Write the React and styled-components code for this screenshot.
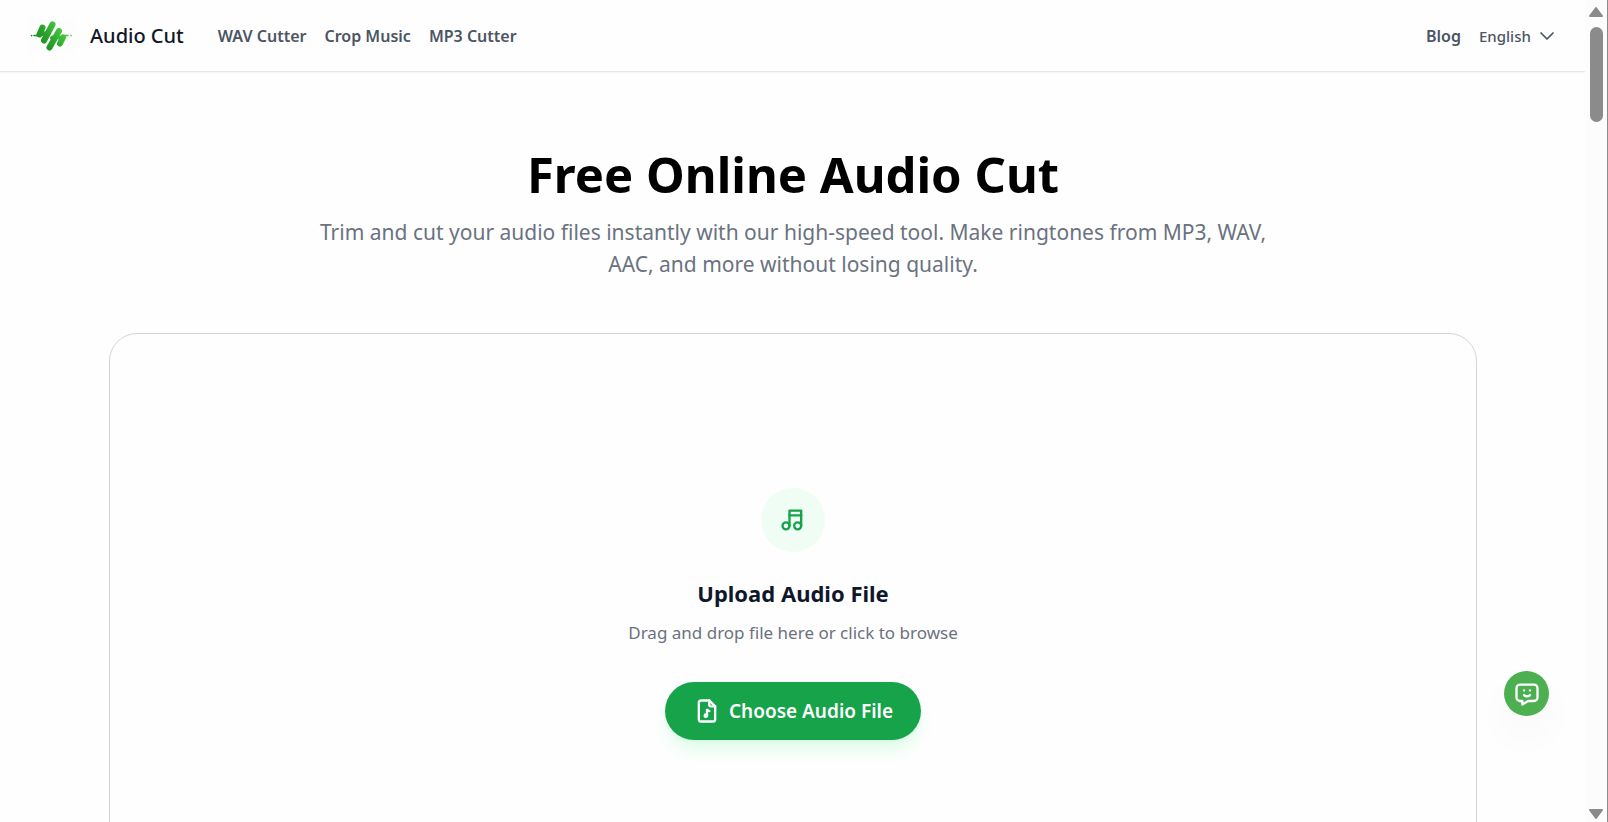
import React from 'react'
import styled, { createGlobalStyle } from 'styled-components'
import { ChevronDown } from 'lucide-react'
import { TbFileMusic, TbMessageChatbot, TbMusic } from 'react-icons/tb'

const navLinks = ["WAV Cutter", "Crop Music", "MP3 Cutter"];

export default function App() {
    return (
        <>
            <GlobalStyle />
            <Screen>
                <Page>
                    <Header />
                    <Main>
                        <Hero>
                            <Title>Free Online Audio Cut</Title>
                            <Lead>
                                Trim and cut your audio files instantly with our high-speed tool. Make ringtones from MP3, WAV, AAC, and more without losing quality.
                            </Lead>
                        </Hero>
                        <UploadCard />
                    </Main>
                </Page>
                <ScrollBar />
            </Screen>
            <ChatButton type="button" aria-label="Feedback">
                <TbMessageChatbot size={28} />
            </ChatButton>
        </>
    )
}

function Header() {
    return (
        <HeaderBar>
            <Brand href="#">
                <Logo />
                Audio Cut
            </Brand>
            <Nav>
                {navLinks.map(link => (
                    <NavLink key={link} href="#">{link}</NavLink>
                ))}
            </Nav>
            <Nav $end>
                <NavLink href="#">Blog</NavLink>
                <Language>
                    <LanguageSelect name="language" aria-label="Language" defaultValue="en">
                        <option value="en">English</option>
                    </LanguageSelect>
                    <ChevronDown size={24} strokeWidth={1.75} />
                </Language>
            </Nav>
        </HeaderBar>
    )
}

function UploadCard() {
    return (
        <Card>
            <IconCircle>
                <TbMusic size={28} />
            </IconCircle>
            <CardTitle>Upload Audio File</CardTitle>
            <Hint>Drag and drop file here or click to browse</Hint>
            <ChooseButton type="button">
                <TbFileMusic size={28} />
                Choose Audio File
            </ChooseButton>
        </Card>
    )
}

function ScrollBar() {
    return (
        <Track aria-hidden="true">
            <svg width="16" height="12" viewBox="0 0 16 12">
                <path d="M8 2 L14 10 H2 Z" fill="#8b8b8b" stroke="#8b8b8b" strokeWidth="2" strokeLinejoin="round" />
            </svg>
            <Thumb />
            <svg width="16" height="12" viewBox="0 0 16 12">
                <path d="M8 10 L14 2 H2 Z" fill="#8b8b8b" stroke="#8b8b8b" strokeWidth="2" strokeLinejoin="round" />
            </svg>
        </Track>
    )
}

function Logo() {
    return (
        <svg width="49" height="36" viewBox="0 0 49 36" aria-hidden="true">
            <defs>
                <linearGradient id="wave" x1="8" y1="30" x2="38" y2="8" gradientUnits="userSpaceOnUse">
                    <stop offset="0" stopColor="#14801f" />
                    <stop offset="0.5" stopColor="#2ba52c" />
                    <stop offset="1" stopColor="#4fd544" />
                </linearGradient>
            </defs>
            <rect width="49" height="36" fill="#fdfdfd" />
            <g fill="none" stroke="url(#wave)" strokeLinecap="round">
                <path d="M7 17.5 L13 17.6 M36 17.6 L41 17.5" strokeWidth="1.6" />
                <path d="M4.5 17.5 L4.6 17.6 M44 17.5 L44.1 17.6" strokeWidth="1.6" />
                <path d="M15.5 9.5 L12.5 16.5 M25.5 6.5 L17 22.5 M32 13 L22.5 29.5 M36 19.5 L33 25.5" strokeWidth="6" />
                <path d="M15 16 L20 15 M25 20 L28 19 M33 20 L36 19" strokeWidth="4" />
            </g>
        </svg>
    )
}

const GlobalStyle = createGlobalStyle`
    * {
        box-sizing: border-box;
    }
    body {
        margin: 0;
        overflow: hidden;
        background: #fefefe;
        color: #0f172a;
        font-family: "Noto Sans", "Open Sans", sans-serif;
    }
`;

const Screen = styled.div`
    display: flex;
    height: 100vh;
`;

const Page = styled.div`
    flex: 1;
    min-width: 0;
    overflow: hidden;
`;

const HeaderBar = styled.header`
    display: flex;
    align-items: center;
    height: 72px;
    padding: 0 26px 0 27px;
    border-bottom: 1px solid #e5e7eb;
    box-shadow: 0 1px 2px rgba(0, 0, 0, 0.05);
`;

const Brand = styled.a`
    display: flex;
    align-items: center;
    gap: 14px;
    color: #111827;
    font-size: 20px;
    font-weight: 500;
    text-decoration: none;
`;

const Nav = styled.nav`
    display: flex;
    align-items: center;
    gap: 18px;
    margin-left: ${props => (props.$end ? "auto" : "34px")};
`;

const NavLink = styled.a`
    color: #4b5563;
    font-size: 16px;
    font-weight: 600;
    text-decoration: none;
`;

const Language = styled.label`
    display: flex;
    align-items: center;
    gap: 4px;
    color: #4b5563;
`;

const LanguageSelect = styled.select`
    appearance: none;
    padding: 0;
    border: 0;
    background: none;
    color: inherit;
    font-family: inherit;
    font-size: 15px;
    font-weight: 500;
`;

const Main = styled.main`
    padding: 72px 108px 0 109px;
`;

const Hero = styled.section`
    max-width: 980px;
    margin: 0 auto 53px;
    text-align: center;
`;

const Title = styled.h1`
    margin: 0 0 12px;
    color: #000;
    font-size: 49px;
    font-weight: 700;
    line-height: 60px;
`;

const Lead = styled.p`
    margin: 0;
    color: #6b7280;
    font-size: 21px;
    line-height: 32px;
`;

const Card = styled.section`
    display: flex;
    flex-direction: column;
    align-items: center;
    padding: 154px 24px;
    border: 1px solid #d1d5db;
    border-radius: 28px;
`;

const IconCircle = styled.div`
    display: flex;
    align-items: center;
    justify-content: center;
    width: 64px;
    height: 64px;
    border-radius: 50%;
    background: #f0fdf4;
    color: #16a34a;
`;

const CardTitle = styled.h2`
    margin: 25px 0 10px;
    font-size: 22px;
    font-weight: 700;
    line-height: 32px;
`;

const Hint = styled.p`
    margin: 0 0 35px;
    color: #6b7280;
    font-size: 17px;
    line-height: 28px;
`;

const ChooseButton = styled.button`
    display: flex;
    align-items: center;
    gap: 8px;
    height: 58px;
    padding: 0 28px;
    border: 0;
    border-radius: 29px;
    background: #16a34a;
    box-shadow: 0 12px 18px -3px #dcfce7, 0 4px 7px -4px #bbf7d0;
    color: #fff;
    font-family: inherit;
    font-size: 19px;
    font-weight: 600;
    cursor: pointer;
`;

const Track = styled.div`
    display: flex;
    flex-direction: column;
    align-items: center;
    width: 23px;
    padding: 6px 0 2px;
    border-right: 1px solid #8b8b8b;
    background: #fcfcfc;
`;

const Thumb = styled.div`
    width: 13px;
    height: 95px;
    margin: 9px 0 auto;
    border-radius: 7px;
    background: #8b8b8b;
`;

const ChatButton = styled.button`
    position: fixed;
    right: 59px;
    bottom: 106px;
    display: flex;
    align-items: center;
    justify-content: center;
    width: 45px;
    height: 45px;
    padding: 0;
    border: 0;
    border-radius: 50%;
    background: #4caf50;
    box-shadow: 0 20px 40px rgba(0, 0, 0, 0.03);
    color: #fff;
    cursor: pointer;
`;
